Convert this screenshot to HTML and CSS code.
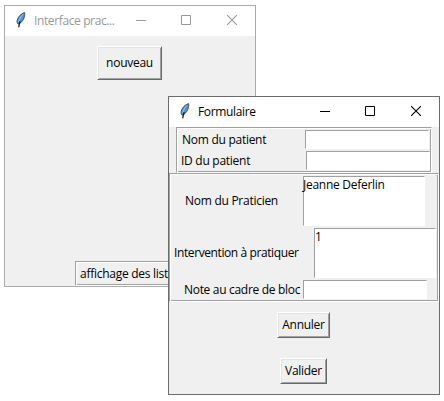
FILE: index.html
```html
<!DOCTYPE html>
<html lang="fr">
<head>
<meta charset="utf-8">
<title>Formulaire</title>
<link rel="stylesheet" href="styles.css">
</head>
<body>
<svg class="defs" aria-hidden="true">
  <symbol id="feather" viewBox="0 0 10 16">
    <path d="M8.6.6C5.4 1.4 2.1 4.7 1.2 8.2c-.4 1.7 0 3.1.9 3.9 2.2-.5 4.5-2.8 5.7-5.6.8-2.1 1.2-4.6.8-5.9z" fill="#4b93dc" stroke="#3a4250" stroke-width=".9"/>
    <path d="M6.9 2.6C4.7 4.5 3.2 7.2 2.7 9.8" fill="none" stroke="#a7cdef" stroke-width="1"/>
    <path d="M4.2 9.2C3.5 11 3 13 2.7 15.3" fill="none" stroke="#101318" stroke-width="1.2"/>
  </symbol>
  <symbol id="minimize" viewBox="0 0 10 10"><path d="M0 5.5h10" stroke="currentColor"/></symbol>
  <symbol id="maximize" viewBox="0 0 10 10"><path d="M.5.5h9v9h-9z" fill="none" stroke="currentColor"/></symbol>
  <symbol id="close" viewBox="0 0 10 10"><path d="M0 0l10 10M10 0L0 10" stroke="currentColor" stroke-width="1.1"/></symbol>
</svg>

<section class="window main-window">
  <header class="titlebar">
    <svg class="app-icon"><use href="#feather"/></svg>
    <span class="title">Interface prac...</span>
    <div class="controls">
      <svg><use href="#minimize"/></svg>
      <svg><use href="#maximize"/></svg>
      <svg><use href="#close"/></svg>
    </div>
  </header>
  <div class="content">
    <button class="btn new">nouveau</button>
    <div class="groove lists">affichage des listes</div>
  </div>
</section>

<section class="window form-window">
  <header class="titlebar">
    <svg class="app-icon"><use href="#feather"/></svg>
    <span class="title">Formulaire</span>
    <div class="controls">
      <svg><use href="#minimize"/></svg>
      <svg><use href="#maximize"/></svg>
      <svg><use href="#close"/></svg>
    </div>
  </header>
  <div class="content">
    <div class="groove patient">
      <div class="row name-row"><span>Nom du patient</span><div class="field"></div></div>
      <div class="row id-row"><span>ID du patient</span><div class="field"></div></div>
    </div>
    <div class="groove details">
      <div class="row prat-row"><span>Nom du Praticien</span><div class="field area">Jeanne Deferlin</div></div>
      <div class="row inter-row"><span>Intervention à pratiquer</span><div class="field area">1</div></div>
      <div class="row note-row"><span>Note au cadre de bloc</span><div class="field"></div></div>
    </div>
    <button class="btn cancel">Annuler</button>
    <button class="btn submit">Valider</button>
  </div>
</section>
</body>
</html>
```
FILE: styles.css
```css
* { box-sizing: border-box; }

body {
  margin: 0;
  height: 401px;
  overflow: hidden;
  position: relative;
  background: #fff;
  color: #000;
  font: 12px/16px "Open Sans", "Noto Sans", sans-serif;
  letter-spacing: -0.27px;
  white-space: nowrap;
}

.defs { display: none; }

.window {
  position: absolute;
  display: flex;
  flex-direction: column;
  background: #f0f0f0;
  border: 1px solid #6b6b6b;
}

.main-window { left: 4px; top: 5px; width: 252px; height: 282px; border-color: #aaa; }
.form-window { left: 168px; top: 96px; width: 272px; height: 299px; }

.titlebar {
  display: flex;
  align-items: flex-start;
  height: 30px;
  flex: none;
  padding: 6px 18px 0 11px;
  background: #fff;
}

.app-icon { width: 10px; height: 16px; }
.title { margin-left: 8px; }
.main-window .title { color: #999; letter-spacing: -0.38px; }
.main-window .titlebar { padding-top: 7px; }
.main-window .app-icon { margin-top: -1px; }
.form-window .title { margin-top: 1px; letter-spacing: -0.35px; }
.controls { display: flex; gap: 35px; margin: 3px 0 0 auto; }
.controls svg { width: 10px; height: 10px; }
.controls svg:last-child { margin-left: 1px; }
.main-window .controls { margin-top: 2px; color: #999; }

.content { display: flex; flex-direction: column; flex: 1; }

.btn {
  appearance: none;
  padding: 0;
  font: inherit;
  letter-spacing: inherit;
  color: inherit;
  background: #f0f0f0;
  border: 1px solid;
  border-color: #fff #696969 #696969 #fff;
  box-shadow: inset 1px 1px #e3e3e3, inset -1px -1px #a0a0a0;
}

.new { width: 65px; height: 34px; margin: 10px 0 0 92px; }
.cancel { width: 53px; height: 26px; margin: 10px 0 0 108px; }
.submit { width: 47px; height: 26px; margin: 20px 0 0 111px; }

.groove {
  border: 1px solid;
  border-color: #a0a0a0 #fff #fff #a0a0a0;
  box-shadow: inset 1px 1px #fff, inset -1px -1px #a0a0a0;
}

.lists { width: 112px; height: 25px; margin: auto 0 0 70px; padding: 4px 0 0 4px; }

.row { display: flex; }

.field {
  width: 124px;
  height: 19px;
  margin-left: auto;
  background: #fff;
  border: 1px solid;
  border-color: #a0a0a0 #fff #fff #a0a0a0;
}

.area { width: 122px; height: 50px; }

.patient { width: 256px; height: 46px; margin-left: 7px; padding: 2px 1px 0 4px; }
.name-row { padding-right: 1px; }
.id-row { margin-top: 2px; }
.name-row span { margin: 2px 0 0 1px; }
.id-row span { margin-top: 2px; }

.details { width: 270px; height: 129px; padding: 2px 2px 0 4px; }
.prat-row { padding: 0 11px 0 11px; }
.prat-row span { margin-top: 17px; }
.prat-row .area { text-indent: -1px; }
.inter-row { margin-top: 2px; }
.inter-row span { margin-top: 17px; letter-spacing: -0.4px; }
.note-row { margin-top: 2px; padding: 0 9px 0 10px; }
.note-row span { margin-top: 2px; letter-spacing: -0.31px; }
```
